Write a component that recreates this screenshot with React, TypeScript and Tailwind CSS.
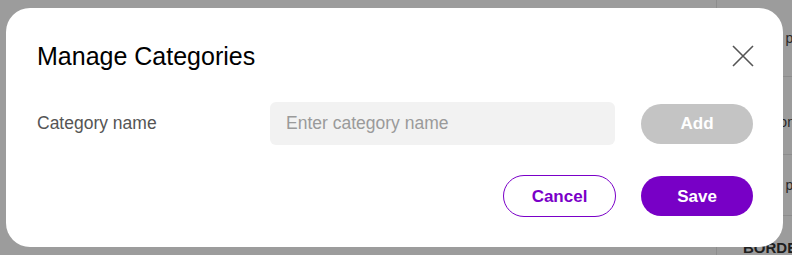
import React from "react";

export default function App() {
  return (
    <div
      className="relative w-[792px] h-[255px] overflow-hidden bg-white"
      style={{ fontFamily: '"Liberation Sans", Arial, sans-serif' }}
    >
      {/* background page */}
      <div className="flex h-full">
        <div className="flex-1" />
        <div className="w-[76px] border-l border-[#e6e6e6] flex flex-col text-[14px] text-[#444] whitespace-nowrap">
          <div className="h-[77px] flex items-center pl-[25px] border-b border-[#e6e6e6]">Check pa</div>
          <div className="h-[78px] flex items-center pl-[25px] pt-[14px] border-b border-[#e6e6e6]">Location</div>
          <div className="h-[61px] flex items-center pl-[25px] border-b border-[#e6e6e6]">Check pa</div>
          <div className="flex-1 flex items-end pl-[26px] font-bold text-[15px] leading-none text-[#333]">BORDE</div>
        </div>
      </div>

      {/* overlay */}
      <div className="absolute inset-0 bg-black/[0.39]" />

      {/* modal */}
      <div className="absolute left-[6px] top-[8px] w-[777px] h-[239px] bg-white rounded-[24px] pt-[32px] pl-[31px] pr-[30px] pb-[30px] flex flex-col">
        <div className="h-[32px] flex items-center justify-between">
          <h2 className="text-[25px] leading-[32px] text-black">Manage Categories</h2>
          <svg width="22" height="22" viewBox="0 0 22 22" className="mr-[-1px]">
            <path d="M1 1 L21 21 M21 1 L1 21" stroke="#555" strokeWidth="1.6" fill="none" />
          </svg>
        </div>

        <div className="mt-[30px] h-[43px] flex items-center">
          <label className="w-[233px] text-[17.5px] text-[#555]">Category name</label>
          <input
            className="w-[345px] h-[43px] rounded-[6px] bg-[#f2f2f2] px-[16px] text-[17.5px] outline-none placeholder:text-[#9a9a9a]"
            placeholder="Enter category name"
          />
          <button className="ml-[26px] w-[112px] h-[40px] rounded-full bg-[#c4c4c4] text-white font-bold text-[17px] pt-[1px]">
            Add
          </button>
        </div>

        <div className="mt-[30px] h-[42px] flex items-center justify-end gap-[25px]">
          <button className="w-[113px] h-[42px] rounded-full border border-[#7a00c8] text-[#7a00c8] font-bold text-[17px] bg-white pt-[1px]">
            Cancel
          </button>
          <button className="w-[112px] h-[40px] rounded-full bg-[#7800c6] text-white font-bold text-[17px] pt-[1px]">
            Save
          </button>
        </div>
      </div>
    </div>
  );
}
